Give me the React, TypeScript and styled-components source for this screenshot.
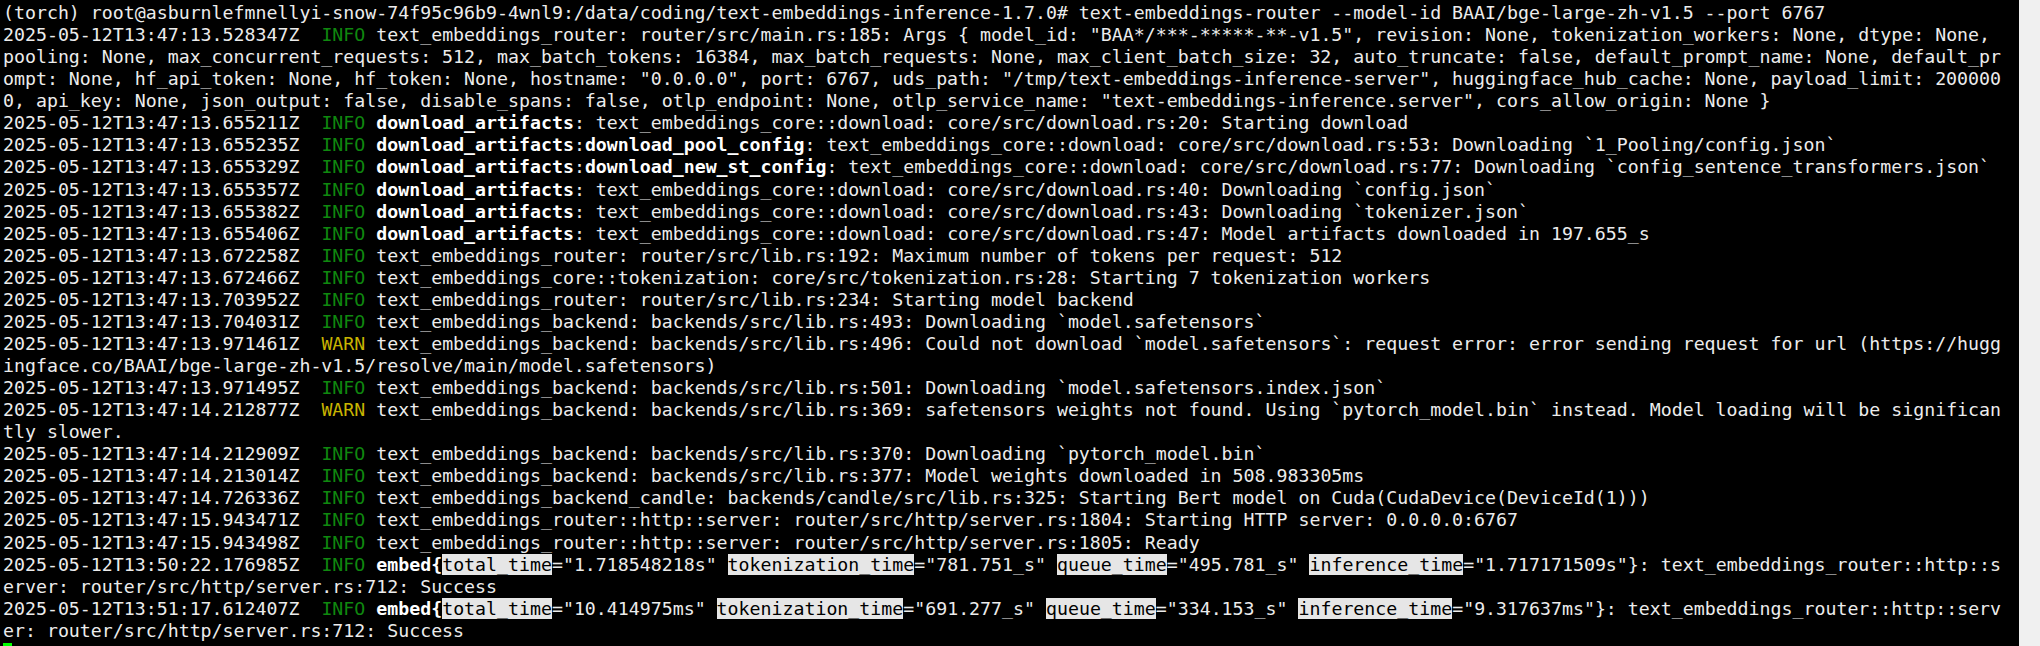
import React from "react";
import styled, { createGlobalStyle } from "styled-components";

type Kind = "n" | "info" | "warn" | "b" | "f";
type Seg = [string, Kind?];

const GlobalStyle = createGlobalStyle`
  html, body {
    margin: 0;
    padding: 0;
    background: #000000;
  }
  #root {
    width: 2040px;
    height: 646px;
  }
`;

const Screen = styled.div`
  display: flex;
  width: 2040px;
  height: 646px;
  overflow: hidden;
`;

const Terminal = styled.div`
  flex: 1;
  background: #000000;
  padding: 2px 0 0 3px;
  font-family: "DejaVu Sans Mono", "Liberation Mono", monospace;
  font-size: 18.24px;
  color: #ececec;
  overflow: hidden;
`;

const Gutter = styled.div`
  width: 21px;
  background: #f0f0f0;
`;

const Line = styled.div`
  height: 22.07px;
  line-height: 22.07px;
  white-space: pre;
`;

const Level = styled.span<{ $warn?: boolean }>`
  color: ${(p) => (p.$warn ? "#c8b400" : "#0f880f")};
`;

const Bold = styled.span`
  font-weight: bold;
  color: #ffffff;
`;

const Field = styled.span`
  background: #e6e6e6;
  color: #000000;
`;

const Cursor = styled.span`
  display: inline-block;
  width: 9px;
  height: 20px;
  margin-top: 1px;
  background: #00ff00;
  vertical-align: top;
`;

const INFO: Seg = ["INFO", "info"];
const WARN: Seg = ["WARN", "warn"];

const rows: Seg[][] = [
  [["(torch) root@asburnlefmnellyi-snow-74f95c96b9-4wnl9:/data/coding/text-embeddings-inference-1.7.0# text-embeddings-router --model-id BAAI/bge-large-zh-v1.5 --port 6767"]],
  [["2025-05-12T13:47:13.528347Z  "], INFO, [' text_embeddings_router: router/src/main.rs:185: Args { model_id: "BAA*/***-*****-**-v1.5", revision: None, tokenization_workers: None, dtype: None, ']],
  [["pooling: None, max_concurrent_requests: 512, max_batch_tokens: 16384, max_batch_requests: None, max_client_batch_size: 32, auto_truncate: false, default_prompt_name: None, default_pr"]],
  [['ompt: None, hf_api_token: None, hf_token: None, hostname: "0.0.0.0", port: 6767, uds_path: "/tmp/text-embeddings-inference-server", huggingface_hub_cache: None, payload_limit: 200000']],
  [['0, api_key: None, json_output: false, disable_spans: false, otlp_endpoint: None, otlp_service_name: "text-embeddings-inference.server", cors_allow_origin: None }']],
  [["2025-05-12T13:47:13.655211Z  "], INFO, [" "], ["download_artifacts", "b"], [": text_embeddings_core::download: core/src/download.rs:20: Starting download"]],
  [["2025-05-12T13:47:13.655235Z  "], INFO, [" "], ["download_artifacts", "b"], [":"], ["download_pool_config", "b"], [": text_embeddings_core::download: core/src/download.rs:53: Downloading `1_Pooling/config.json`"]],
  [["2025-05-12T13:47:13.655329Z  "], INFO, [" "], ["download_artifacts", "b"], [":"], ["download_new_st_config", "b"], [": text_embeddings_core::download: core/src/download.rs:77: Downloading `config_sentence_transformers.json`"]],
  [["2025-05-12T13:47:13.655357Z  "], INFO, [" "], ["download_artifacts", "b"], [": text_embeddings_core::download: core/src/download.rs:40: Downloading `config.json`"]],
  [["2025-05-12T13:47:13.655382Z  "], INFO, [" "], ["download_artifacts", "b"], [": text_embeddings_core::download: core/src/download.rs:43: Downloading `tokenizer.json`"]],
  [["2025-05-12T13:47:13.655406Z  "], INFO, [" "], ["download_artifacts", "b"], [": text_embeddings_core::download: core/src/download.rs:47: Model artifacts downloaded in 197.655_s"]],
  [["2025-05-12T13:47:13.672258Z  "], INFO, [" text_embeddings_router: router/src/lib.rs:192: Maximum number of tokens per request: 512"]],
  [["2025-05-12T13:47:13.672466Z  "], INFO, [" text_embeddings_core::tokenization: core/src/tokenization.rs:28: Starting 7 tokenization workers"]],
  [["2025-05-12T13:47:13.703952Z  "], INFO, [" text_embeddings_router: router/src/lib.rs:234: Starting model backend"]],
  [["2025-05-12T13:47:13.704031Z  "], INFO, [" text_embeddings_backend: backends/src/lib.rs:493: Downloading `model.safetensors`"]],
  [["2025-05-12T13:47:13.971461Z  "], WARN, [" text_embeddings_backend: backends/src/lib.rs:496: Could not download `model.safetensors`: request error: error sending request for url (https://hugg"]],
  [["ingface.co/BAAI/bge-large-zh-v1.5/resolve/main/model.safetensors)"]],
  [["2025-05-12T13:47:13.971495Z  "], INFO, [" text_embeddings_backend: backends/src/lib.rs:501: Downloading `model.safetensors.index.json`"]],
  [["2025-05-12T13:47:14.212877Z  "], WARN, [" text_embeddings_backend: backends/src/lib.rs:369: safetensors weights not found. Using `pytorch_model.bin` instead. Model loading will be significan"]],
  [["tly slower."]],
  [["2025-05-12T13:47:14.212909Z  "], INFO, [" text_embeddings_backend: backends/src/lib.rs:370: Downloading `pytorch_model.bin`"]],
  [["2025-05-12T13:47:14.213014Z  "], INFO, [" text_embeddings_backend: backends/src/lib.rs:377: Model weights downloaded in 508.983305ms"]],
  [["2025-05-12T13:47:14.726336Z  "], INFO, [" text_embeddings_backend_candle: backends/candle/src/lib.rs:325: Starting Bert model on Cuda(CudaDevice(DeviceId(1)))"]],
  [["2025-05-12T13:47:15.943471Z  "], INFO, [" text_embeddings_router::http::server: router/src/http/server.rs:1804: Starting HTTP server: 0.0.0.0:6767"]],
  [["2025-05-12T13:47:15.943498Z  "], INFO, [" text_embeddings_router::http::server: router/src/http/server.rs:1805: Ready"]],
  [
    ["2025-05-12T13:50:22.176985Z  "], INFO, [" "], ["embed{", "b"],
    ["total_time", "f"], ['="1.718548218s" '],
    ["tokenization_time", "f"], ['="781.751_s" '],
    ["queue_time", "f"], ['="495.781_s" '],
    ["inference_time", "f"], ['="1.717171509s"}: text_embeddings_router::http::s'],
  ],
  [["erver: router/src/http/server.rs:712: Success"]],
  [
    ["2025-05-12T13:51:17.612407Z  "], INFO, [" "], ["embed{", "b"],
    ["total_time", "f"], ['="10.414975ms" '],
    ["tokenization_time", "f"], ['="691.277_s" '],
    ["queue_time", "f"], ['="334.153_s" '],
    ["inference_time", "f"], ['="9.317637ms"}: text_embeddings_router::http::serv'],
  ],
  [["er: router/src/http/server.rs:712: Success"]],
];

function renderSeg(seg: Seg, i: number) {
  const [text, kind = "n"] = seg;
  switch (kind) {
    case "info":
      return <Level key={i}>{text}</Level>;
    case "warn":
      return <Level key={i} $warn>{text}</Level>;
    case "b":
      return <Bold key={i}>{text}</Bold>;
    case "f":
      return <Field key={i}>{text}</Field>;
    default:
      return <React.Fragment key={i}>{text}</React.Fragment>;
  }
}

export default function App() {
  return (
    <>
      <GlobalStyle />
      <Screen>
        <Terminal>
          {rows.map((row, r) => (
            <Line key={r}>{row.map(renderSeg)}</Line>
          ))}
          <Line>
            <Cursor />
          </Line>
        </Terminal>
        <Gutter />
      </Screen>
    </>
  );
}
